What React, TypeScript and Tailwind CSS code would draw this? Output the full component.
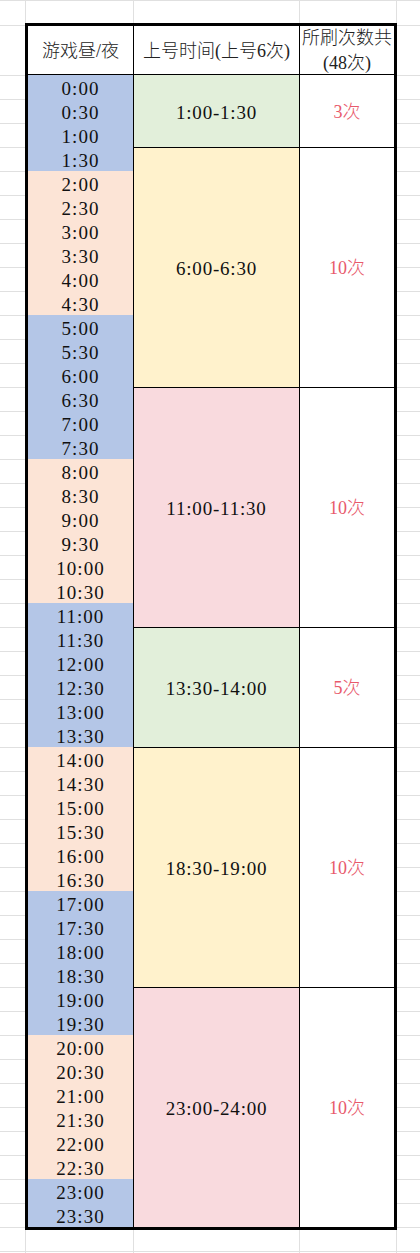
const FONT = "font-['Liberation_Serif','Noto_Sans_CJK_SC',serif]";

const times = Array.from({ length: 48 }, (_, i) => `${Math.floor(i / 2)}:${i % 2 ? "30" : "00"}`);

const bands = [
  { n: 4, bg: "bg-[#b4c6e7]" },
  { n: 6, bg: "bg-[#fce4d6]" },
  { n: 6, bg: "bg-[#b4c6e7]" },
  { n: 6, bg: "bg-[#fce4d6]" },
  { n: 6, bg: "bg-[#b4c6e7]" },
  { n: 6, bg: "bg-[#fce4d6]" },
  { n: 6, bg: "bg-[#b4c6e7]" },
  { n: 6, bg: "bg-[#fce4d6]" },
  { n: 2, bg: "bg-[#b4c6e7]" },
];

const groups = [
  { h: "h-[72px]", t: "1:00-1:30", bg: "bg-[#e2efda]", k: "3次" },
  { h: "h-[240px]", t: "6:00-6:30", bg: "bg-[#fff2cc]", k: "10次" },
  { h: "h-[240px]", t: "11:00-11:30", bg: "bg-[#f9dade]", k: "10次" },
  { h: "h-[120px]", t: "13:30-14:00", bg: "bg-[#e2efda]", k: "5次" },
  { h: "h-[240px]", t: "18:30-19:00", bg: "bg-[#fff2cc]", k: "10次" },
  { h: "h-[240px]", t: "23:00-24:00", bg: "bg-[#f9dade]", k: "10次" },
];

// sheet grid cells above / below the table
function Strip({ top }: { top?: boolean }) {
  const cell = "h-full border-l border-[#e0e0e0]";
  const cells = (
    <>
      <div className="w-[25px]" />
      <div className={`${cell} w-[108px]`} />
      <div className={`${cell} w-[166px]`} />
      <div className={`${cell} w-[97px]`} />
      <div className={`${cell} flex-1`} />
    </>
  );
  if (top) return <div className="flex w-[420px] h-[23px] border-t border-[#e0e0e0]">{cells}</div>;
  return (
    <div className="flex flex-col w-[420px] h-[23px]">
      <div className="flex h-[21px]">{cells}</div>
      <div className="flex h-[2px] border-t border-[#e0e0e0]">{cells}</div>
    </div>
  );
}

function Margin({ w }: { w: string }) {
  return (
    <div className={`${w} flex flex-col`}>
      <div className="h-[2px]" />
      <div className="h-[50px] border-t border-[#e0e0e0]" />
      {times.map((t) => (
        <div key={t} className="h-[24px] border-t border-[#e0e0e0]" />
      ))}
      <div className="flex-1 border-t border-[#e0e0e0]" />
    </div>
  );
}

export default function App() {
  let idx = 0;
  return (
    <div className={`w-[420px] h-[1253px] bg-white overflow-hidden text-[#111] ${FONT}`}>
      <Strip top />
      <div className="flex">
        <Margin w="w-[25px]" />

        {/* Table */}
        <div className="w-[372px] border-[3px] border-black">
          <div className="flex h-[49px] border-b border-black text-[18px] font-light text-[#222]">
            <div className="w-[106px] border-r border-black flex items-center justify-center pt-[3px]">
              游戏昼/夜
            </div>
            <div className="w-[166px] border-r border-black flex items-center justify-center pt-[3px]">
              上号时间(上号6次)
            </div>
            <div className="flex-1 flex flex-col items-center justify-center leading-[25px] pt-[2px]">
              <span>所刷次数共</span>
              <span>(48次)</span>
            </div>
          </div>

          <div className="flex">
            <div className="w-[106px] border-r border-black">
              {bands.map((b, bi) => (
                <div key={bi} className={b.bg}>
                  {Array.from({ length: b.n }, () => times[idx++]).map((t) => (
                    <div
                      key={t}
                      className="h-[24px] flex items-center justify-center text-[19px] tracking-[1px] leading-[20px] pt-[4px]"
                    >
                      {t}
                    </div>
                  ))}
                </div>
              ))}
            </div>

            <div className="w-[166px] border-r border-black">
              {groups.map((g, i) => (
                <div
                  key={i}
                  className={`${g.h} ${g.bg} ${i ? "border-t border-black" : ""} flex items-center justify-center text-[19px] tracking-[0.8px] pt-[4px]`}
                >
                  {g.t}
                </div>
              ))}
            </div>

            <div className="flex-1">
              {groups.map((g, i) => (
                <div
                  key={i}
                  className={`${g.h} ${i ? "border-t border-black" : ""} flex items-center justify-center text-[18px] font-light text-[#e8596b] pt-[2px]`}
                >
                  {g.k}
                </div>
              ))}
            </div>
          </div>
        </div>

        <Margin w="w-[23px]" />
      </div>
      <Strip />
    </div>
  );
}
